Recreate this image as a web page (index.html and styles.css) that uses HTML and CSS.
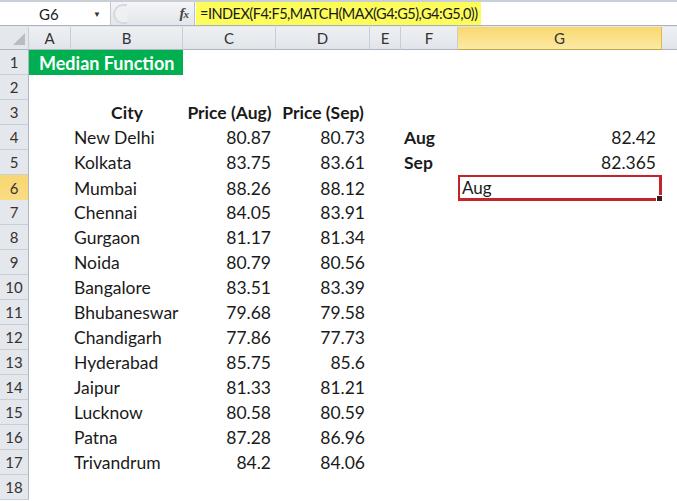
FILE: index.html
```html
<!DOCTYPE html>
<html>
<head>
<meta charset="utf-8">
<link rel="stylesheet" href="styles.css">
</head>
<body>
<div class="app">
  <div class="fbar">
    <div class="namebox"><span class="nb-text">G6</span><span class="nb-arrow">▼</span></div>
    <div class="fb-mid">
      <span class="ear"></span>
      <span class="fx">f<span class="fx-x">x</span></span>
    </div>
    <div class="fb-input"><span class="formula">=INDEX(F4:F5,MATCH(MAX(G4:G5),G4:G5,0))</span></div>
  </div>
  <div class="gap"></div>
  <div class="sheet">
    <div class="row head">
      <div class="corner"><svg width="14" height="14" viewBox="0 0 14 14"><polygon points="13,1 13,13 1,13" fill="#b7bdc6"/></svg></div>
      <div class="ch">A</div><div class="ch">B</div><div class="ch">C</div><div class="ch">D</div><div class="ch">E</div><div class="ch">F</div><div class="ch sel">G</div><div class="ch last"></div>
    </div>
    <div class="row"><div class="rh">1</div><div class="c title span2">Median Function</div><div class="c"></div><div class="c"></div><div class="c"></div><div class="c"></div><div class="c"></div><div class="c"></div></div>
    <div class="row"><div class="rh">2</div><div class="c"></div><div class="c"></div><div class="c"></div><div class="c"></div><div class="c"></div><div class="c"></div><div class="c"></div><div class="c"></div></div>
    <div class="row"><div class="rh">3</div><div class="c"></div><div class="c b ctr">City</div><div class="c b ctr">Price (Aug)</div><div class="c b ctr">Price (Sep)</div><div class="c"></div><div class="c"></div><div class="c"></div><div class="c"></div></div>
    <div class="row"><div class="rh">4</div><div class="c"></div><div class="c txt">New Delhi</div><div class="c num">80.87</div><div class="c num">80.73</div><div class="c"></div><div class="c b txt">Aug</div><div class="c num g">82.42</div><div class="c"></div></div>
    <div class="row"><div class="rh">5</div><div class="c"></div><div class="c txt">Kolkata</div><div class="c num">83.75</div><div class="c num">83.61</div><div class="c"></div><div class="c b txt">Sep</div><div class="c num g">82.365</div><div class="c"></div></div>
    <div class="row"><div class="rh sel">6</div><div class="c"></div><div class="c txt">Mumbai</div><div class="c num">88.26</div><div class="c num">88.12</div><div class="c"></div><div class="c"></div><div class="c active">Aug</div><div class="c"></div></div>
    <div class="row"><div class="rh">7</div><div class="c"></div><div class="c txt">Chennai</div><div class="c num">84.05</div><div class="c num">83.91</div><div class="c"></div><div class="c"></div><div class="c"></div><div class="c"></div></div>
    <div class="row"><div class="rh">8</div><div class="c"></div><div class="c txt">Gurgaon</div><div class="c num">81.17</div><div class="c num">81.34</div><div class="c"></div><div class="c"></div><div class="c"></div><div class="c"></div></div>
    <div class="row"><div class="rh">9</div><div class="c"></div><div class="c txt">Noida</div><div class="c num">80.79</div><div class="c num">80.56</div><div class="c"></div><div class="c"></div><div class="c"></div><div class="c"></div></div>
    <div class="row"><div class="rh">10</div><div class="c"></div><div class="c txt">Bangalore</div><div class="c num">83.51</div><div class="c num">83.39</div><div class="c"></div><div class="c"></div><div class="c"></div><div class="c"></div></div>
    <div class="row"><div class="rh">11</div><div class="c"></div><div class="c txt">Bhubaneswar</div><div class="c num">79.68</div><div class="c num">79.58</div><div class="c"></div><div class="c"></div><div class="c"></div><div class="c"></div></div>
    <div class="row"><div class="rh">12</div><div class="c"></div><div class="c txt">Chandigarh</div><div class="c num">77.86</div><div class="c num">77.73</div><div class="c"></div><div class="c"></div><div class="c"></div><div class="c"></div></div>
    <div class="row"><div class="rh">13</div><div class="c"></div><div class="c txt">Hyderabad</div><div class="c num">85.75</div><div class="c num">85.6</div><div class="c"></div><div class="c"></div><div class="c"></div><div class="c"></div></div>
    <div class="row"><div class="rh">14</div><div class="c"></div><div class="c txt">Jaipur</div><div class="c num">81.33</div><div class="c num">81.21</div><div class="c"></div><div class="c"></div><div class="c"></div><div class="c"></div></div>
    <div class="row"><div class="rh">15</div><div class="c"></div><div class="c txt">Lucknow</div><div class="c num">80.58</div><div class="c num">80.59</div><div class="c"></div><div class="c"></div><div class="c"></div><div class="c"></div></div>
    <div class="row"><div class="rh">16</div><div class="c"></div><div class="c txt">Patna</div><div class="c num">87.28</div><div class="c num">86.96</div><div class="c"></div><div class="c"></div><div class="c"></div><div class="c"></div></div>
    <div class="row"><div class="rh">17</div><div class="c"></div><div class="c txt">Trivandrum</div><div class="c num">84.2</div><div class="c num">84.06</div><div class="c"></div><div class="c"></div><div class="c"></div><div class="c"></div></div>
    <div class="row"><div class="rh">18</div><div class="c"></div><div class="c"></div><div class="c"></div><div class="c"></div><div class="c"></div><div class="c"></div><div class="c"></div><div class="c"></div></div>
  </div>
</div>
</body>
</html>
```

FILE: styles.css
```css
* { box-sizing: border-box; }
html, body { margin: 0; padding: 0; background: #ffffff; }
body { width: 677px; height: 501px; overflow: hidden; font-family: Lato, "Liberation Sans", sans-serif; color: #1a1a1a; }
.app { display: flex; flex-direction: column; width: 677px; }

.fbar { display: flex; height: 26px; border-top: 2px solid #c9cfd7; border-bottom: 1px solid #aab3bf; background: #ffffff; }
.namebox { width: 111px; display: flex; align-items: center; border-right: 1px solid #c3c9d1; padding-left: 39px; font-size: 15px; color: #222; }
.nb-text { width: 54px; }
.nb-arrow { font-size: 8px; color: #333; }
.fb-mid { width: 84px; display: flex; align-items: center; justify-content: space-between; padding: 0 6px 0 2px; background: linear-gradient(#f4f5f7, #e3e6ea); border-right: 1px solid #b9c0c9; }
.ear { width: 14px; height: 20px; border: 2px solid #d5d9de; border-right: none; border-radius: 12px 0 0 12px; background: #eef0f2; }
.fx { font-family: "Liberation Serif", serif; font-style: italic; font-weight: bold; font-size: 15px; color: #444; letter-spacing: -1px; }
.fx-x { font-size: 11px; }
.fb-input { flex: 1; display: flex; align-items: stretch; padding-left: 1px; }
.formula { background: #fcfc5a; font-size: 14.5px; color: #1a1a1a; display: flex; align-items: center; padding: 0 3px 0 4px; letter-spacing: -0.5px; }

.gap { height: 1px; background: #e3e6ea; }

.sheet { display: flex; flex-direction: column; }
.row { display: grid; grid-template-columns: 29px 42px 112px 93px 94px 31px 57px 204px 15px; height: 25px; }
.row.head { height: 23px; }
.corner { background: #e4e7eb; border-right: 1px solid #c8ced6; border-bottom: 1px solid #aeb6c0; display: flex; align-items: flex-end; justify-content: flex-end; padding: 0 2px 3px 0; }
.ch { background: linear-gradient(#eef0f3, #e1e5ea); border-right: 1px solid #c8ced6; border-bottom: 1px solid #aeb6c0; display: flex; align-items: center; justify-content: center; font-size: 15px; color: #333; }
.ch.sel { background: linear-gradient(#f8d86f, #fde9a5); border-right: 1px solid #e0b94a; border-bottom: 1px solid #c9a43c; color: #333; }
.ch.last { border-right: none; }
.rh { background: #e4e7eb; border-right: 1px solid #aeb6c0; border-bottom: 1px solid #c8ced6; display: flex; align-items: center; justify-content: center; font-size: 15px; color: #333; }
.rh.sel { background: linear-gradient(#f8d672, #fbdc84); border-bottom: 1px solid #e0b94a; }

.c { display: flex; align-items: center; font-size: 17.5px; white-space: nowrap; overflow: visible; min-width: 0; }
.span2 { grid-column: span 2; }
.title { background: #00b050; color: #ffffff; font-weight: bold; padding-left: 10px; font-size: 18px; }
.b { font-weight: bold; }
.ctr { justify-content: center; }
.txt { padding-left: 3px; }
.num { justify-content: flex-end; padding-right: 5px; }
.num.g { padding-right: 6px; }
.active { position: relative; border: 2px solid #c4232a; border-width: 2px 3px 3px 2px; padding-left: 2px; font-size: 17px; }
.active::after { content: ""; position: absolute; right: -4px; bottom: -4px; width: 5px; height: 5px; background: #3a1a1a; border: 1px solid #ffffff; }
```
